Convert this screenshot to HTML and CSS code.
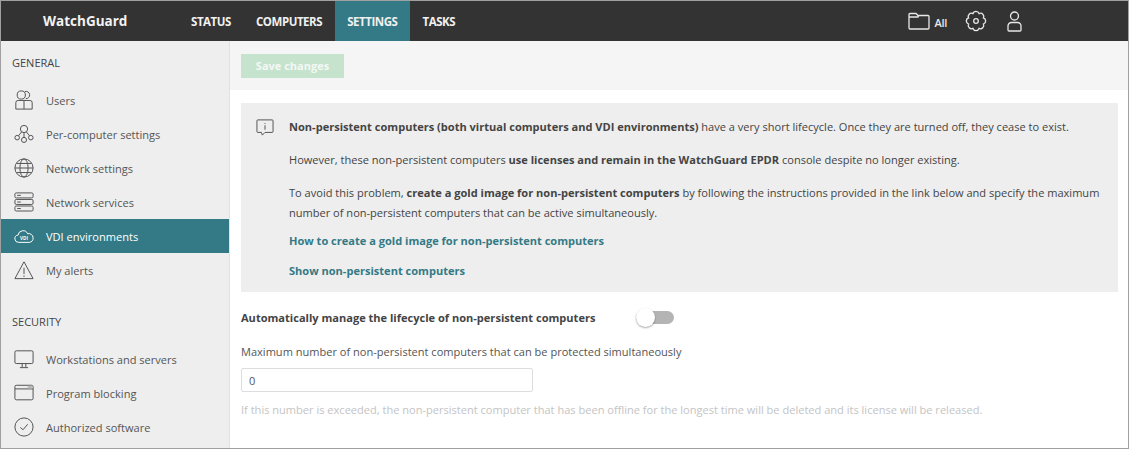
FILE: index.html
```html
<!DOCTYPE html>
<html lang="en">
<head>
    <meta charset="UTF-8">
    <title>WatchGuard - VDI environments</title>
    <link rel="stylesheet" href="styles.css">
</head>
<body>
    <div class="window">
        <header class="topbar">
            <div class="brand">WatchGuard</div>
            <nav class="nav">
                <a class="nav-item">STATUS</a>
                <a class="nav-item">COMPUTERS</a>
                <a class="nav-item active">SETTINGS</a>
                <a class="nav-item">TASKS</a>
            </nav>
            <div class="top-tools">
                <svg class="folder-icon" width="22" height="18" viewBox="0 0 22 18"><path d="M1 16V2.500A1 1 0 0 1 2 1.500h6l2 2h10a1 1 0 0 1 1 1V16a1 1 0 0 1-1 1H2a1 1 0 0 1-1-1zM1 5h9l1-1.500"/></svg>
                <span class="folder-label">All</span>
                <svg class="gear-icon" width="22" height="22" viewBox="0 0 22 22"><path d="M18.390 7.940A3.200 3.200 0 0 1 18.390 14.060A3.200 3.200 0 0 1 14.060 18.390A3.200 3.200 0 0 1 7.940 18.390A3.200 3.200 0 0 1 3.610 14.060A3.200 3.200 0 0 1 3.610 7.940A3.200 3.200 0 0 1 7.940 3.610A3.200 3.200 0 0 1 14.060 3.610A3.200 3.200 0 0 1 18.390 7.940Z"/><circle cx="11" cy="11" r="2.300"/></svg>
                <svg class="user-icon" width="15" height="21" viewBox="0 0 15 21"><circle cx="7.500" cy="5" r="4"/><path d="M2 20a1 1 0 0 1-1-1v-4a3.500 3.500 0 0 1 3.500-3.500h6A3.500 3.500 0 0 1 14 15v4a1 1 0 0 1-1 1z"/></svg>
            </div>
        </header>

        <div class="layout">
            <aside class="sidebar">
                <h2 class="side-title">GENERAL</h2>
                <ul class="side-list">
                    <li class="side-item">
                        <svg class="side-icon" viewBox="0 0 22 22"><circle cx="8" cy="5.500" r="4.500"/><path d="M12 1.700a4 4 0 1 1 1 7.800M2 21v-7a2.500 2.500 0 0 1 2.500-2.500h13A2.500 2.500 0 0 1 20 14v7zM11 11.500V21"/></svg>
                        Users
                    </li>
                    <li class="side-item">
                        <svg class="side-icon" viewBox="0 0 22 22"><circle cx="11" cy="5.500" r="4"/><circle cx="3.500" cy="15" r="2.500"/><circle cx="11" cy="17.500" r="2.800"/><circle cx="18.500" cy="15" r="2.500"/><path d="M8.500 8.500l-3.500 4.500M13.500 8.500l3.500 4.500M11 9.500v5"/></svg>
                        Per-computer settings
                    </li>
                    <li class="side-item">
                        <svg class="side-icon" viewBox="0 0 22 22"><circle cx="11" cy="11" r="10"/><ellipse cx="11" cy="11" rx="4.500" ry="10"/><path d="M1 11h20M3 6h16M3 16h16"/></svg>
                        Network settings
                    </li>
                    <li class="side-item">
                        <svg class="side-icon" viewBox="0 0 22 22"><rect x="1" y="1" width="20" height="5.500" rx="1.500"/><rect x="1" y="8.200" width="20" height="5.500" rx="1.500"/><rect x="1" y="15.400" width="20" height="5.500" rx="1.500"/><path d="M3.500 3.700h4M3.500 11h4M3.500 18.200h4"/></svg>
                        Network services
                    </li>
                    <li class="side-item active">
                        <svg class="side-icon" viewBox="0 0 22 22"><path d="M5 18a4 4 0 0 1-4-3.500A4 4 0 0 1 4.500 10 5.500 5.500 0 0 1 15 8.500a4.800 4.800 0 0 1 6 4.500 4.500 4.500 0 0 1-4 5z"/><text class="vdi-text" x="11" y="15.500">VDI</text></svg>
                        VDI environments
                    </li>
                    <li class="side-item">
                        <svg class="side-icon" viewBox="0 0 22 22"><path d="M11 2L1 20.500h20zM11 8.500v7M11 17v1.500"/></svg>
                        My alerts
                    </li>
                </ul>
                <h2 class="side-title security">SECURITY</h2>
                <ul class="side-list">
                    <li class="side-item">
                        <svg class="side-icon" viewBox="0 0 22 22"><rect x="1" y="2" width="20" height="14" rx="1.500"/><path d="M9 16v4M13 16v4M6.500 20.500h9"/></svg>
                        Workstations and servers
                    </li>
                    <li class="side-item">
                        <svg class="side-icon" viewBox="0 0 22 22"><rect x="1" y="2.500" width="20" height="16" rx="1.500"/><path d="M1 6.500h20"/><rect class="title-block" x="15" y="3" width="5.500" height="3"/></svg>
                        Program blocking
                    </li>
                    <li class="side-item">
                        <svg class="side-icon" viewBox="0 0 22 22"><circle cx="11" cy="11" r="10"/><path d="M7 11.500l3 2.500 5-6"/></svg>
                        Authorized software
                    </li>
                </ul>
            </aside>

            <main class="content">
                <div class="toolbar">
                    <button class="save-btn">Save changes</button>
                </div>
                <div class="body-area">
                    <section class="info-box">
                        <svg class="info-icon" width="18" height="17" viewBox="0 0 20 19"><path d="M2 1h16a1 1 0 0 1 1 1v12a1 1 0 0 1-1 1H10l-3 3-1-3H2a1 1 0 0 1-1-1V2a1 1 0 0 1 1-1zM10 4.500v1M10 7v5"/></svg>
                        <div class="info-text">
                            <p><b>Non-persistent computers (both virtual computers and VDI environments)</b> have a very short lifecycle. Once they are turned off, they cease to exist.</p>
                            <p>However, these non-persistent computers <b>use licenses and remain in the WatchGuard EPDR</b> console despite no longer existing.</p>
                            <p class="wrap-para">To avoid this problem, <b>create a gold image for non-persistent computers</b> by following the instructions provided in the link below and specify the maximum number of non-persistent computers that can be active simultaneously.</p>
                            <p class="link-para"><a class="info-link">How to create a gold image for non-persistent computers</a></p>
                            <p class="link-para"><a class="info-link">Show non-persistent computers</a></p>
                        </div>
                    </section>

                    <div class="toggle-row">
                        <span class="toggle-label">Automatically manage the lifecycle of non-persistent computers</span>
                        <span class="toggle"><span class="knob"></span></span>
                    </div>
                    <label class="max-label" for="maxnum">Maximum number of non-persistent computers that can be protected simultaneously</label>
                    <input id="maxnum" class="max-input" type="text" value="0">
                    <p class="hint">If this number is exceeded, the non-persistent computer that has been offline for the longest time will be deleted and its license will be released.</p>
                </div>
            </main>
        </div>
    </div>
</body>
</html>
```

FILE: styles.css
```css
html, body {
    margin: 0;
    padding: 0;
}

body {
    font-family: "Open Sans", "Noto Sans", sans-serif;
    font-size: 11.050px;
    color: #444;
    background-color: white;
}

.window {
    width: 1129px;
    height: 449px;
    box-sizing: border-box;
    border: 1px solid #a0a0a0;
    overflow: hidden;
    display: flex;
    flex-direction: column;
}

.topbar {
    height: 40px;
    flex-shrink: 0;
    display: flex;
    align-items: stretch;
    background-color: #333;
    color: white;
}

.brand {
    width: 177.500px;
    padding-left: 42px;
    box-sizing: border-box;
    font-size: 13.500px;
    font-weight: 700;
    line-height: 40px;
    color: #f2f2f2;
}

.nav {
    display: flex;
}

.nav-item {
    padding: 0 12.500px;
    font-size: 11.500px;
    font-weight: 700;
    line-height: 42px;
    letter-spacing: -0.450px;
    color: #f0f0f0;
}

.nav-item.active {
    background-color: #337a86;
}

.top-tools {
    margin-left: auto;
    display: flex;
    align-items: center;
    padding-right: 106px;
}

.top-tools svg {
    fill: none;
    stroke: #e8e8e8;
    stroke-width: 1.300;
}

.folder-label {
    margin: 3px 18px 0 4px;
    font-size: 11px;
    font-weight: 600;
    letter-spacing: -0.300px;
    color: #e8e8e8;
}

.gear-icon {
    margin-right: 20px;
}

.layout {
    flex: 1;
    display: flex;
    min-height: 0;
}

.sidebar {
    width: 229px;
    flex-shrink: 0;
    box-sizing: border-box;
    background-color: #eee;
    border-right: 1px solid #e2e2e2;
    padding-top: 14px;
}

.side-title {
    margin: 0;
    padding-left: 11px;
    font-size: 11px;
    font-weight: 400;
    line-height: 16px;
    color: #444;
}

.side-title.security {
    margin-top: 27px;
}

.side-list {
    list-style: none;
    margin: 12px 0 0;
    padding: 0;
}

.side-item {
    height: 34px;
    display: flex;
    align-items: center;
    gap: 12px;
    padding-left: 13px;
    color: #555;
}

.side-item.active {
    background-color: #337a86;
    color: white;
}

.side-icon {
    width: 20px;
    height: 20px;
    flex-shrink: 0;
    fill: none;
    stroke: #555;
    stroke-width: 1.100;
}

.side-item.active .side-icon {
    stroke: white;
}

.title-block {
    fill: #bbb;
    stroke: none;
}

.vdi-text {
    font-size: 5px;
    font-weight: 700;
    text-anchor: middle;
    fill: white;
    stroke: none;
}

.content {
    flex: 1;
    min-width: 0;
}

.toolbar {
    height: 49px;
    box-sizing: border-box;
    padding-top: 13px;
    background-color: #f5f5f5;
}

.save-btn {
    display: block;
    margin-left: 11px;
    width: 103px;
    height: 24px;
    padding: 0 0 2px;
    border: 0;
    background-color: #c5e3cd;
    color: #f4f8f5;
    font-family: inherit;
    font-size: 11px;
    font-weight: 700;
}

.body-area {
    padding: 13px 10px 0 11px;
}

.info-box {
    display: flex;
    gap: 15px;
    height: 189px;
    box-sizing: border-box;
    padding: 14px 12px 0 15px;
    background-color: #eee;
}

.info-icon {
    flex-shrink: 0;
    margin-top: 2px;
    fill: none;
    stroke: #555;
    stroke-width: 1.100;
}

.info-text p {
    margin: 0 0 13px;
    line-height: 20px;
}

.info-text .wrap-para {
    margin-bottom: 8px;
}

.info-text .link-para {
    margin-bottom: 10px;
}

.info-text b {
    font-weight: 700;
}

.info-link {
    color: #337a86;
    font-weight: 700;
}

.toggle-row {
    display: flex;
    align-items: center;
    margin-top: 14px;
    height: 22px;
}

.toggle-label {
    width: 395px;
    font-weight: 700;
    color: #444;
}

.toggle {
    position: relative;
    width: 38px;
    height: 13px;
    border-radius: 7px;
    background-color: #b4b4b4;
}

.knob {
    position: absolute;
    left: 0;
    top: -3px;
    width: 19px;
    height: 19px;
    border-radius: 50%;
    background-color: white;
    box-shadow: 0 1px 2px rgba(0, 0, 0, 0.350);
}

.max-label {
    display: block;
    margin-top: 16px;
    line-height: 16px;
    color: #555;
}

.max-input {
    display: block;
    margin-top: 8px;
    width: 292px;
    height: 24px;
    box-sizing: border-box;
    padding: 0 7px;
    border: 1px solid #ddd;
    border-radius: 2px;
    font-family: inherit;
    font-size: 11px;
    color: #555;
    background-color: white;
}

.hint {
    margin: 10px 0 0;
    line-height: 16px;
    color: #c4c4c4;
}
```
